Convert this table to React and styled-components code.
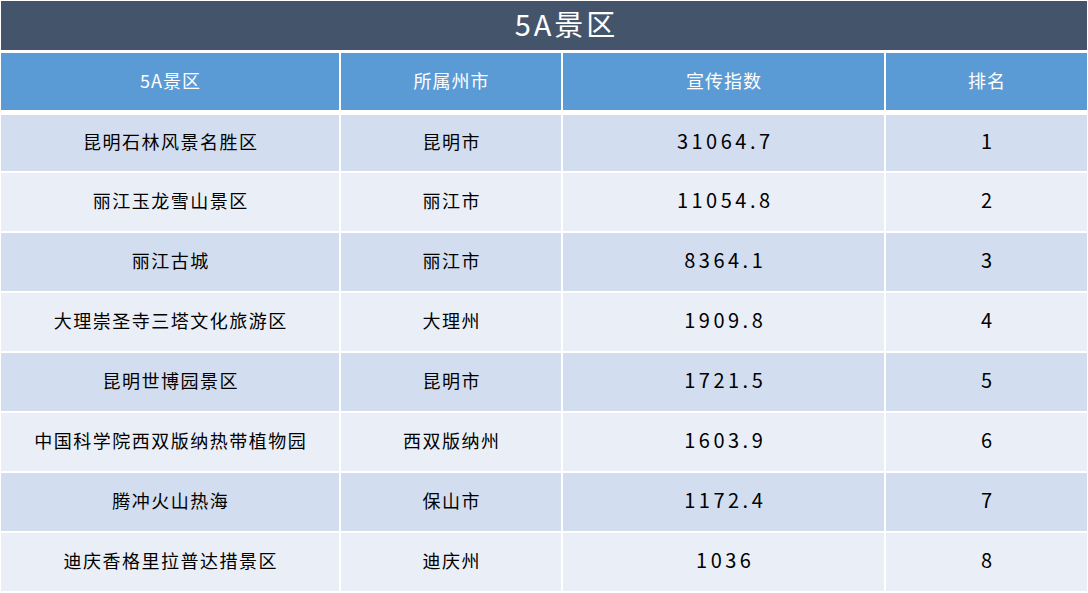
import React from "react";
import styled, { createGlobalStyle } from "styled-components";

const GlobalStyle = createGlobalStyle`
  html, body {
    margin: 0;
    padding: 0;
    background: #ffffff;
  }
  body {
    font-family: "Noto Sans CJK SC", "Noto Sans", sans-serif;
  }
`;

const rows = [
  { name: "昆明石林风景名胜区", city: "昆明市", index: "31064.7", rank: 1 },
  { name: "丽江玉龙雪山景区", city: "丽江市", index: "11054.8", rank: 2 },
  { name: "丽江古城", city: "丽江市", index: "8364.1", rank: 3 },
  { name: "大理崇圣寺三塔文化旅游区", city: "大理州", index: "1909.8", rank: 4 },
  { name: "昆明世博园景区", city: "昆明市", index: "1721.5", rank: 5 },
  { name: "中国科学院西双版纳热带植物园", city: "西双版纳州", index: "1603.9", rank: 6 },
  { name: "腾冲火山热海", city: "保山市", index: "1172.4", rank: 7 },
  { name: "迪庆香格里拉普达措景区", city: "迪庆州", index: "1036", rank: 8 },
];

const App = () => (
  <>
    <GlobalStyle />
    <Page>
      <TitleBar>5A景区</TitleBar>
      <HeaderRow>
        <HeadCell>5A景区</HeadCell>
        <HeadCell>所属州市</HeadCell>
        <HeadCell>宣传指数</HeadCell>
        <HeadCell>排名</HeadCell>
      </HeaderRow>
      <Body>
        {rows.map((r, i) => (
          <Row key={r.rank} $striped={i % 2 === 0} $first={i === 0}>
            <Cell>{r.name}</Cell>
            <Cell>{r.city}</Cell>
            <NumCell>{r.index}</NumCell>
            <NumCell>{r.rank}</NumCell>
          </Row>
        ))}
      </Body>
    </Page>
  </>
);

const Page = styled.div`
  width: 1086px;
  padding: 1px 1px 2px 1px;
  display: flex;
  flex-direction: column;
`;

const TitleBar = styled.div`
  height: 49px;
  box-sizing: border-box;
  padding: 0 0 6px 45px;
  background: #44546a;
  color: #ffffff;
  font-size: 29px;
  letter-spacing: 3px;
  display: flex;
  align-items: center;
  justify-content: center;
  margin-bottom: 3px;
`;

const grid = `
  display: grid;
  grid-template-columns: 338px 220px 321px 201px;
  column-gap: 2px;
`;

const HeaderRow = styled.div`
  ${grid}
  height: 57px;
  margin-bottom: 5px;
`;

const HeadCell = styled.div`
  background: #5b9bd5;
  color: #ffffff;
  font-size: 18px;
  letter-spacing: 1px;
  box-sizing: border-box;
  padding: 0 0 4px 1px;
  display: flex;
  align-items: center;
  justify-content: center;
`;

const Body = styled.div`
  display: flex;
  flex-direction: column;
  gap: 2px;
`;

const Row = styled.div`
  ${grid}
  height: ${(p) => (p.$first ? "56px" : "58px")};
  & > div {
    background: ${(p) => (p.$striped ? "#d2deef" : "#eaeff7")};
  }
`;

const Cell = styled.div`
  color: #000000;
  font-size: 18px;
  letter-spacing: 1.5px;
  box-sizing: border-box;
  padding: 0 0 5px 1.5px;
  display: flex;
  align-items: center;
  justify-content: center;
`;

const NumCell = styled(Cell)`
  font-size: 20px;
  letter-spacing: 3.5px;
  padding-left: 3.5px;
`;

export default App;
